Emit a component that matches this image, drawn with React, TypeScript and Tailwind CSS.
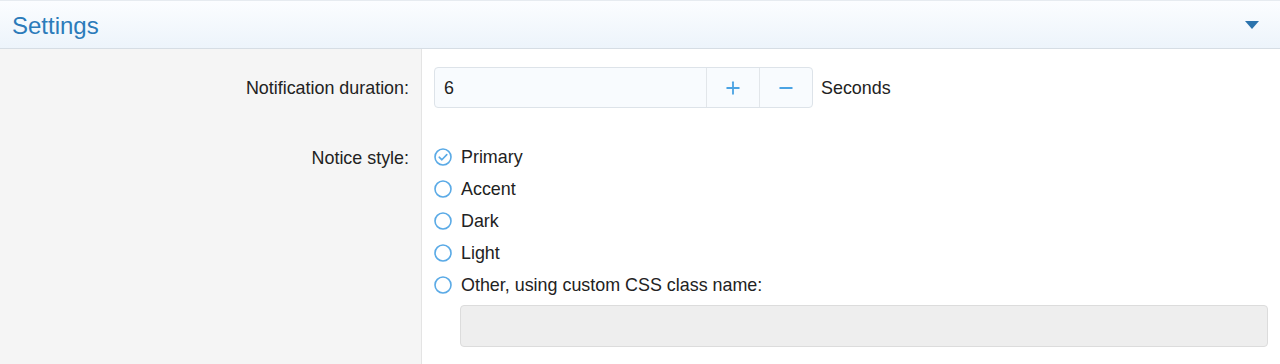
import { Plus, Minus } from "lucide-react";

const styles = ["Primary", "Accent", "Dark", "Light", "Other, using custom CSS class name:"];

function Radio({ checked }: { checked: boolean }) {
  return (
    <svg width="18" height="18" viewBox="0 0 18 18" className="shrink-0">
      <circle cx="9" cy="9" r="8" fill="white" stroke="#5aaae6" strokeWidth="1.6" />
      {checked && (
        <path d="M5.2 9.2 L7.9 11.8 L12.8 6.6" fill="none" stroke="#5aaae6" strokeWidth="1.6" strokeLinecap="round" strokeLinejoin="round" />
      )}
    </svg>
  );
}

export default function App() {
  return (
    <div className="w-[1280px] h-[364px] overflow-hidden bg-white text-[17.9px] text-[#222] font-['Liberation_Sans',Arial,sans-serif]">
      {/* Header */}
      <div className="h-[49px] border-t border-[#e6ebf0] border-b border-b-[#d6dde4] bg-gradient-to-b from-[#fbfdff] to-[#edf4fb] flex items-center justify-between pl-[12px] pr-[21px]">
        <h1 className="text-[24px] text-[#2b7bba] leading-none pt-[2px]">Settings</h1>
        <svg width="14" height="8" viewBox="0 0 14 8">
          <path d="M0 0 H14 L7 8 Z" fill="#2b73ad" />
        </svg>
      </div>

      {/* Body */}
      <div className="flex h-[315px]">
        <div className="w-[422px] shrink-0 bg-[#f5f5f5] border-r border-[#e4e4e4] pt-[19px] pr-[12px] text-right">
          <div className="h-[41px] flex items-center justify-end">Notification duration:</div>
          <div className="h-[32px] mt-[33px] flex items-center justify-end">Notice style:</div>
        </div>

        <div className="flex-1 pt-[18px] pl-[12px]">
          <div className="flex items-center">
            <div className="flex h-[41px] w-[379px] border border-[#dde3e9] rounded-[4px] bg-[#f8fbfe] overflow-hidden">
              <div className="flex-1 flex items-center pl-[9px] pt-[2px]">6</div>
              <div className="w-[53px] border-l border-[#e2e6ea] flex items-center justify-center">
                <Plus size={20} strokeWidth={2.2} color="#4ba3e3" />
              </div>
              <div className="w-[53px] border-l border-[#e2e6ea] flex items-center justify-center">
                <Minus size={20} strokeWidth={2.2} color="#4ba3e3" />
              </div>
            </div>
            <span className="ml-[8px] pt-[2px]">Seconds</span>
          </div>

          <div className="mt-[33px]">
            {styles.map((s, i) => (
              <div key={s} className="h-[32px] flex items-center gap-[9px]">
                <Radio checked={i === 0} />
                <span className="pt-[1px]">{s}</span>
              </div>
            ))}
            <div className="ml-[26px] mt-[4px] w-[808px] h-[42px] rounded-[4px] bg-[#eeeeee] border border-[#dcdcdc]" />
          </div>
        </div>
      </div>
    </div>
  );
}
